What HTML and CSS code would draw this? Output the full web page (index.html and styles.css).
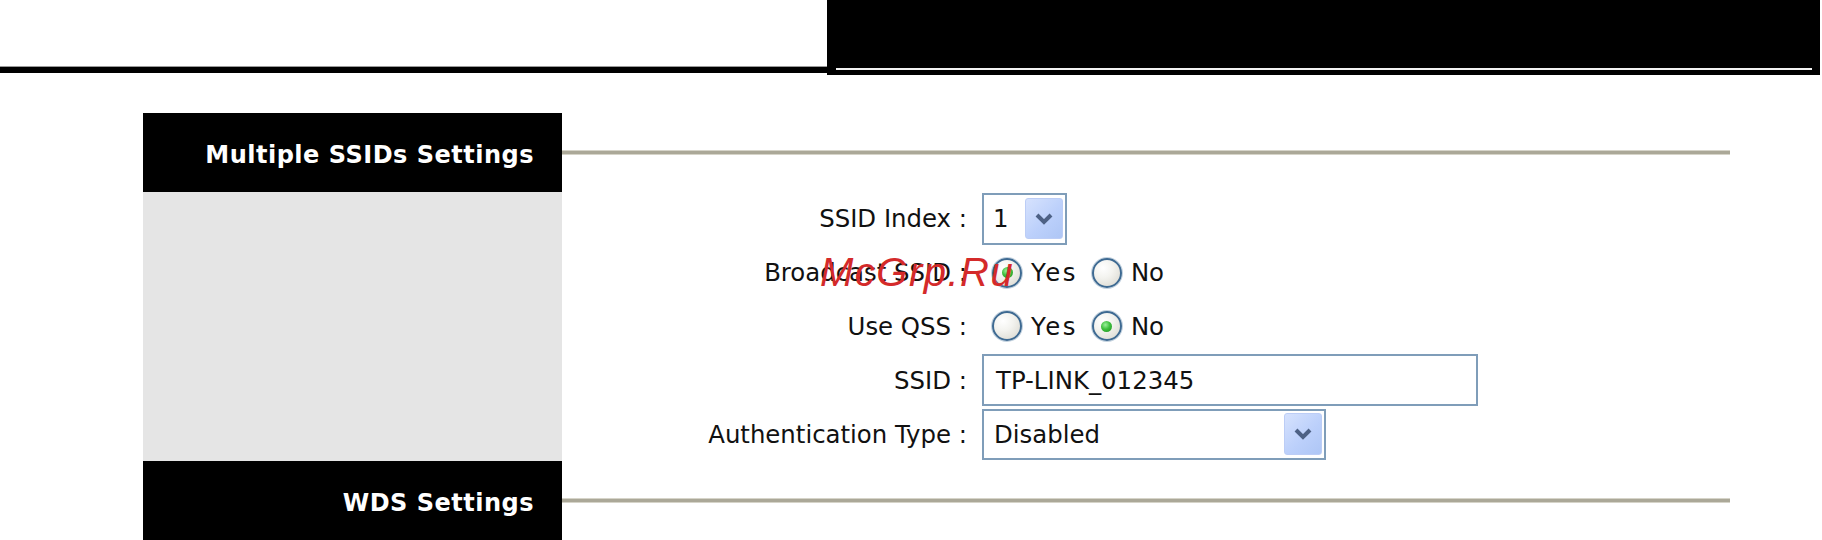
FILE: index.html
```html
<!DOCTYPE html>
<html lang="en">
<head>
<meta charset="utf-8">
<title>Multiple SSIDs Settings</title>
<link rel="stylesheet" href="styles.css">
</head>
<body>
<div class="topbar">
  <div class="topbar-rule"></div>
  <div class="topbar-box"><div class="topbar-line"></div></div>
</div>

<div class="panel">
  <div class="sec-title">Multiple SSIDs Settings</div>
  <div class="sec-rule-cell"><div class="sec-rule"></div></div>

  <div class="side"></div>
  <div class="form">
    <div class="label">SSID Index :</div>
    <div class="control">
      <div class="select select-index">
        <span class="select-value">1</span>
        <span class="select-btn"><svg width="20" height="14" viewBox="0 0 20 14"><polyline points="3,3 10,10 17,3" fill="none" stroke="#4d6185" stroke-width="4"/></svg></span>
      </div>
    </div>

    <div class="label">Broadcast SSID :</div>
    <div class="control radios">
      <span class="radio checked"></span><span class="opt opt-yes">Yes</span>
      <span class="radio radio-no"></span><span class="opt">No</span>
    </div>

    <div class="label">Use QSS :</div>
    <div class="control radios">
      <span class="radio"></span><span class="opt opt-yes">Yes</span>
      <span class="radio radio-no checked"></span><span class="opt">No</span>
    </div>

    <div class="label">SSID :</div>
    <div class="control">
      <div class="textbox">TP-LINK_012345</div>
    </div>

    <div class="label">Authentication Type :</div>
    <div class="control">
      <div class="select select-auth">
        <span class="select-value">Disabled</span>
        <span class="select-btn"><svg width="20" height="14" viewBox="0 0 20 14"><polyline points="3,3 10,10 17,3" fill="none" stroke="#4d6185" stroke-width="4"/></svg></span>
      </div>
    </div>
  </div>

  <div class="sec-title">WDS Settings</div>
  <div class="sec-rule-cell"><div class="sec-rule"></div></div>
</div>

<div class="watermark">McGrp.Ru</div>
</body>
</html>
```

FILE: styles.css
```css
html, body {
  margin: 0;
  padding: 0;
  background: #ffffff;
  overflow: hidden;
}
body {
  width: 1822px;
  height: 540px;
  position: relative;
  font-family: "DejaVu Sans", Verdana, sans-serif;
  color: #111;
}

/* top bar */
.topbar {
  display: flex;
  height: 76px;
}
.topbar-rule {
  flex: 0 0 827px;
  margin-top: 66px;
  height: 6px;
  background: #000;
  border-top: 1px solid #9a9a9a;
}
.topbar-box {
  flex: 0 0 993px;
  height: 75px;
  background: #000;
  display: flex;
  flex-direction: column;
  justify-content: flex-end;
  padding: 0 8px 5px 9px;
  box-sizing: border-box;
}
.topbar-line {
  height: 2px;
  background: #f2f2f2;
}

/* panel */
.panel {
  margin: 37px 0 0 143px;
  width: 1587px;
  display: grid;
  grid-template-columns: 419px 1fr;
  grid-template-rows: 79px 269px 79px;
}
.sec-title {
  background: #000;
  color: #fff;
  font-family: "DejaVu Sans", Verdana, sans-serif;
  font-weight: bold;
  font-size: 24px;
  letter-spacing: 0.5px;
  line-height: 28px;
  padding: 28px 28px 0 0;
  text-align: right;
  white-space: nowrap;
}
.sec-rule-cell {
  padding-top: 37px;
}
.sec-rule {
  height: 3px;
  background: #aba898;
  border-top: 1px solid #d6d4c9;
  border-bottom: 1px solid #d6d4c9;
}
.side {
  background: #e5e5e5;
}

/* form */
.form {
  display: grid;
  grid-template-columns: 405px 1fr;
  grid-template-rows: repeat(5, 1fr);
  column-gap: 15px;
  align-items: center;
}
.label {
  text-align: right;
  font-size: 24.4px;
  white-space: nowrap;
}
.control {
  display: flex;
  align-items: center;
  font-size: 24.4px;
}

.select {
  box-sizing: border-box;
  border: 2px solid #7f9db9;
  background: #fff;
  display: flex;
  align-items: center;
  padding: 0 2px 0 9px;
}
.select-index {
  width: 85px;
  height: 52px;
}
.select-auth {
  width: 344px;
  height: 51px;
  padding-left: 10px;
}
.select-value {
  flex: 1;
  white-space: nowrap;
}
.select-btn {
  width: 38px;
  height: 41px;
  box-sizing: border-box;
  border: 1px solid #bccdf6;
  border-radius: 3px;
  background: linear-gradient(135deg, #d6e2fd 0%, #bcd0fb 55%, #aec6f5 100%);
  display: flex;
  align-items: center;
  justify-content: center;
}
.select-auth .select-btn {
  height: 42px;
}

.radios .radio {
  box-sizing: border-box;
  width: 30px;
  height: 30px;
  border-radius: 50%;
  border: 2px solid #3e6a92;
  box-shadow: 0 0 0 1px #c3d2df;
  background: radial-gradient(circle at 35% 30%, #ffffff 0%, #f3f3ef 40%, #d7d5cc 100%);
  margin-left: 10px;
  display: flex;
  align-items: center;
  justify-content: center;
}
.radios .radio-no {
  margin-left: 14px;
}
.radio.checked::after {
  content: "";
  width: 11px;
  height: 11px;
  border-radius: 50%;
  background: radial-gradient(circle at 40% 35%, #9bf09b 0%, #3fc03f 45%, #1d8f1d 100%);
}
.opt {
  margin-left: 9px;
}
.opt-yes {
  letter-spacing: 2.5px;
}

.textbox {
  box-sizing: border-box;
  width: 496px;
  height: 52px;
  border: 2px solid #7f9db9;
  padding-left: 12px;
  display: flex;
  align-items: center;
  white-space: nowrap;
}

/* watermark overlay */
.watermark {
  position: absolute;
  left: 820px;
  top: 252px;
  font-family: "Liberation Sans", Arial, sans-serif;
  font-style: italic;
  font-size: 40px;
  line-height: 1;
  letter-spacing: 1.5px;
  color: #d42a2a;
  white-space: nowrap;
}
```
